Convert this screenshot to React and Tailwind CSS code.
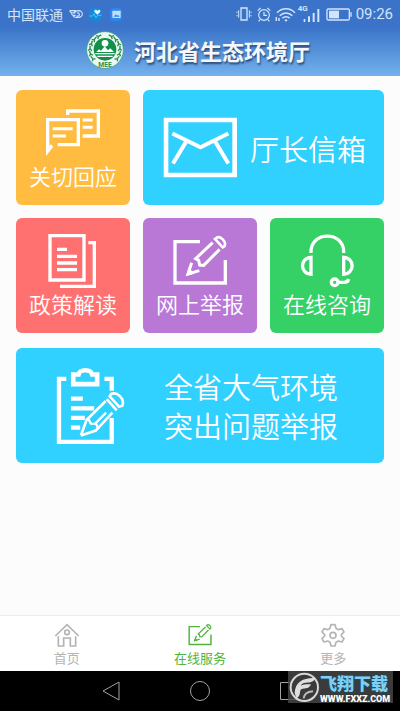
import { Activity, Image } from "lucide-react";

/* --- Status bar --- */
function StatusBar() {
  return (
    <div className="flex h-7 items-center justify-between pl-[7px] pr-[7px] text-[#d3e4fa]">
      <div className="flex items-center">
        <span className="text-sm leading-5">中国联通</span>
        <svg className="ml-[6px] h-3 w-[14px]" viewBox="0 0 42 36" fill="none" stroke="currentColor" strokeWidth="3.5">
          <path d="M2 8h17c2 0 3 2 1 3l-6 2M2 8c2 5 5 7 11 7h6M7 16c1 4 4 6 8 6h5M12 23c1 4 4 5 8 5h9c6 0 11-5 11-10s-5-10-11-10l-8 1" />
          <path d="M24 15c5-1 8 2 7 6s-5 4-8 2" />
        </svg>
        <span className="ml-[6px] flex h-[13px] w-[13px] items-center justify-center rounded-sm bg-[#1689dc]">
          <svg className="h-[13px] w-[13px]" viewBox="0 0 39 39" fill="none">
            <path d="M1 24h10l4-7 6 13 5-8h12" stroke="#4fbfe0" strokeWidth="3" />
            <path d="M25 20l-8-7c-4-6 4-11 8-4 4-7 12-2 8 4z" fill="#e9fbff" />
          </svg>
        </span>
        <span className="ml-2 flex h-[13px] w-3 items-center justify-center rounded-sm bg-[#2f86ee]">
          <svg className="h-[9px] w-[9px]" viewBox="0 0 27 27">
            <rect x="1" y="2" width="25" height="22" rx="2" fill="#bfe0ff" />
            <path d="M5 20l6-7 4 4 3-3 5 6z" fill="#2f86ee" />
          </svg>
        </span>
      </div>

      <div className="flex items-center">
        <svg className="h-[14px] w-4" viewBox="0 0 48 42" fill="none" stroke="currentColor" strokeWidth="4">
          <path d="M15 3h18v36H15z" />
          <path d="M8 10v22M40 10v22" strokeWidth="3" />
          <path d="M3 14v4M3 24v4M45 14v4M45 24v4" strokeWidth="3" />
        </svg>
        <svg className="ml-[5px] h-[15px] w-[14px]" viewBox="0 0 42 45" fill="none" stroke="currentColor" strokeWidth="3.5">
          <circle cx="21" cy="24" r="16" />
          <path d="M21 14v11h9M2 11l9-8M40 11l-9-8M9 38l-4 5M33 38l4 5" />
        </svg>
        <svg className="ml-[4px] h-[15px] w-[21px]" viewBox="0 0 63 45" fill="none" stroke="currentColor" strokeWidth="4.5">
          <path d="M6 17c15-16 39-16 54 0M14 26c11-11 27-11 38 0M22 34c6-6 16-6 22 0" />
          <circle cx="33" cy="40" r="3.5" fill="currentColor" stroke="none" />
          <path d="M4 30v12M12 33v9" />
        </svg>
        <div className="relative ml-[2px] h-[18px] w-[23px]">
          <span className="absolute left-0 top-0 font-[Roboto] text-[8px] font-bold leading-[8px]">4G</span>
          <svg className="h-[18px] w-[23px]" viewBox="0 0 69 54" fill="currentColor">
            <path d="M17 42h5v9h-5zM30 34h6v17h-6zM44 24h6v27h-6zM58 12h6v39h-6z" />
          </svg>
        </div>
        <svg className="ml-[5px] h-[13px] w-[26px]" viewBox="0 0 78 39" fill="none" stroke="currentColor" strokeWidth="4">
          <rect x="3" y="3" width="67" height="33" rx="4" />
          <path d="M9 8h30v23H9z" fill="currentColor" stroke="none" />
          <path d="M75 13v13" />
        </svg>
        <span className="ml-1 font-[Roboto] text-[15px] leading-5">09:26</span>
      </div>
    </div>
  );
}

function Emblem() {
  const leaves = [-125, -105, -85, -65, -45, -25, 25, 45, 65, 85, 105, 125];
  return (
    <svg className="h-[38px] w-[38px] shrink-0" viewBox="0 0 114 114">
      <circle cx="57" cy="57" r="55" fill="#eef8f2" stroke="#3d9d76" strokeWidth="2" />
      <g fill="none" stroke="#1d9052" strokeWidth="4">
        {leaves.map((angle) => (
          <path
            key={angle}
            d={angle < 0 ? "M51 7l6 5 9-1M51 18l6-6" : "M63 7l-6 5-9-1M63 18l-6-6"}
            transform={`rotate(${angle} 57 57)`}
          />
        ))}
      </g>
      <circle cx="57" cy="55" r="34" fill="#12904b" />
      <circle cx="57" cy="37" r="10" fill="#fff" />
      <path d="M31 63l8-8 6 4 11-13 10 12 7-6 11 11z" fill="#fff" />
      <path d="M28 68h58M34 76h46" stroke="#fff" strokeWidth="4" />
      <text x="57" y="107" textAnchor="middle" fontSize="20" fontWeight="700" fill="#1d9052" className="font-[Roboto]">
        MEE
      </text>
    </svg>
  );
}

/* --- Tile icons --- */
function ChatIcon() {
  return (
    <svg className="h-14 w-[60px]" viewBox="129 75 180 168" fill="none" stroke="currentColor" strokeWidth="10">
      <path d="M173 194h62v-75h-92v78" />
      <path d="M138 190v38l22-28-7-7-5 6v-9z" fill="currentColor" stroke="none" />
      <path d="M203 105V93h92v75h-47" />
      <path d="M158 146h60M158 168h40M248 120h30M248 142h30" strokeWidth="9" />
    </svg>
  );
}

function PolicyIcon() {
  return (
    <svg className="h-14 w-[60px]" viewBox="129 69 180 168" fill="none" stroke="currentColor" strokeWidth="10">
      <path d="M150 77h102v133H150z" />
      <path d="M265 98h18v131H180" />
      <path d="M171 118h30M171 139h60M171 159h60M171 179h60" />
    </svg>
  );
}

function EditIcon({ className }) {
  return (
    <svg className={className} viewBox="15 24 180 168" fill="none" stroke="currentColor" strokeWidth="10">
      <path d="M105 50H30v124h151v-69" />
      <path d="M143 53L92 101l9 5 3 14 12 1 48-48" strokeWidth="9" />
      <path d="M80 113l-11 34 34-10" strokeWidth="9" />
      <path d="M63 153l8-26 17 19z" fill="currentColor" stroke="none" />
      <path d="M154 39c10-9 31 10 25 24l-6 4-23-25z" strokeWidth="8" />
    </svg>
  );
}

function HeadsetIcon() {
  return (
    <svg className="h-14 w-[60px]" viewBox="291 69 180 168" fill="none" stroke="currentColor" strokeWidth="10">
      <path d="M333 129v-4c0-62 98-62 98 0v4" />
      <path d="M333 142v51c-34-2-34-49 0-51zM431 142v51c34-2 34-49 0-51z" />
      <circle cx="404" cy="217" r="10" />
      <path d="M414 217h18c8 0 12-2 14-10" />
    </svg>
  );
}

function MailIcon() {
  return (
    <svg className="h-[61px] w-[75px] shrink-0" viewBox="68 110 224 184" fill="none" stroke="currentColor" strokeWidth="14">
      <path d="M76 119h207v166H76z" />
      <path d="M95 160l85 41 84-41M97 250l41-68M264 250l-41-68" strokeWidth="12" />
    </svg>
  );
}

function ClipboardIcon() {
  return (
    <svg className="h-[78px] w-[69px] shrink-0" viewBox="168 80 208 234" fill="none" stroke="currentColor" strokeWidth="13">
      <path d="M199 115h-22v190h159v-72M314 115h22v36" />
      <path d="M220 102h16c4-17 37-17 41 0h15v29h-72z" strokeWidth="14" />
      <path d="M213 175h36M213 204h70M213 233h42M213 262h28" />
      <path d="M243 286l17-47 58-57M243 286l45-15 50-54" strokeWidth="8" />
      <path d="M265 235l8 15 16 1 7 16M286 250l33-33" strokeWidth="7" />
      <path d="M321 176l30 34M334 161c18-9 42 14 34 35l-10 3-28-31z" strokeWidth="8" />
    </svg>
  );
}

/* --- Bottom tab icons --- */
function HomeIcon() {
  return (
    <svg className="h-[26px] w-[26px]" viewBox="160 50 78 78" fill="none" stroke="currentColor" strokeWidth="5">
      <path d="M164 92l35-34 35 34M173 93v29h16v-24h20v24h16V93" />
      <circle cx="199" cy="81" r="7" />
    </svg>
  );
}

function GearIcon() {
  return (
    <svg className="h-[26px] w-[26px]" viewBox="0 0 78 78" fill="none" stroke="currentColor" strokeWidth="5" strokeLinejoin="round">
      <path d="M33 8h12l3 11 7 4 11-3 6 10-8 8v4l8 8-6 10-11-3-7 4-3 11H33l-3-11-7-4-11 3-6-10 8-8v-4l-8-8 6-10 11 3 7-4z" />
      <circle cx="39" cy="40" r="9" />
    </svg>
  );
}

function Tile({ icon, label, className }) {
  return (
    <button type="button" className={`flex h-[115px] flex-col items-center rounded-md pt-[15px] ${className}`}>
      {icon}
      <span className="text-[22px] font-[350] leading-7">{label}</span>
    </button>
  );
}

function Tab({ icon, label, active }) {
  return (
    <button
      type="button"
      className={`flex flex-1 flex-col items-center pt-[6px] ${active ? "text-[#4fb53c]" : "text-[#b4b4b4]"}`}
    >
      {icon}
      <span className="text-[13px] leading-5">{label}</span>
    </button>
  );
}

function SystemNav() {
  return (
    <div className="relative flex h-10 items-center justify-center gap-[69px] bg-black text-[#a3a3a3]">
      <button type="button" aria-label="返回">
        <svg className="h-5 w-5" viewBox="0 0 20 20" fill="none" stroke="currentColor">
          <path d="M18 1v18L2 10z" />
        </svg>
      </button>
      <button type="button" aria-label="主屏幕">
        <svg className="h-5 w-5" viewBox="0 0 20 20" fill="none" stroke="currentColor">
          <circle cx="10" cy="10" r="9.5" />
        </svg>
      </button>
      <button type="button" aria-label="最近任务">
        <svg className="h-5 w-5" viewBox="0 0 20 20" fill="none" stroke="currentColor">
          <path d="M1.5 1.5h17v17h-17z" />
        </svg>
      </button>

      {/* Site badge over the corner */}
      <div className="absolute right-[7px] top-0 flex h-8 w-[105px] items-center bg-[#4a4a4a]/80">
        <svg className="h-8 w-8 shrink-0" viewBox="0 0 96 96">
          <circle cx="49" cy="49" r="41" fill="#3a3a3a" stroke="#d8d8d8" strokeWidth="6" />
          <path d="M20 66c2-32 22-46 61-45-3 10-10 14-27 14-8 0-13 3-16 9 8-4 20-5 31-4-4 10-11 13-24 13-7 0-9 5-9 12-1 9-5 14-11 16z" fill="#dedede" />
          <path d="M47 82c2-13 8-19 28-21" stroke="#bbb" strokeWidth="6" fill="none" />
        </svg>
        <div className="flex flex-col">
          <span className="text-[17px] font-black leading-6 text-[#7fd0f0] [text-shadow:0_0_2px_#0b5d96]">飞翔下载</span>
          <span className="font-[Roboto] text-[9px] font-black leading-[8px] text-white">WWW.FXXZ.COM</span>
        </div>
      </div>
    </div>
  );
}

export default function App() {
  return (
    <div className="flex min-h-screen flex-col bg-[#fcfcfc] font-['Noto_Sans_CJK_SC',sans-serif]">
      <header className="bg-linear-to-b from-[#3a73c8] from-35% to-[#73b1ec]">
        <StatusBar />
        <div className="flex h-12 items-center justify-center gap-[10px] pb-1 pr-1">
          <Emblem />
          <h1 className="text-[22px] font-bold leading-8 text-[#f4f7fb] [text-shadow:1px_2px_2px_#2b4a78]">
            河北省生态环境厅
          </h1>
        </div>
      </header>

      <main className="flex flex-1 flex-col px-4 pt-[14px] text-white">
        <div className="grid grid-cols-3 gap-[13px]">
          <Tile icon={<ChatIcon />} label="关切回应" className="bg-[#ffbc40]" />
          <button type="button" className="col-span-2 flex items-center gap-3 rounded-md bg-[#30d0ff] pl-5">
            <MailIcon />
            <span className="text-[29px] font-[350] leading-10">厅长信箱</span>
          </button>
          <Tile icon={<PolicyIcon />} label="政策解读" className="bg-[#ff7171]" />
          <Tile icon={<EditIcon className="h-14 w-[60px]" />} label="网上举报" className="bg-[#b978d6]" />
          <Tile icon={<HeadsetIcon />} label="在线咨询" className="bg-[#35d167]" />
        </div>
        <button
          type="button"
          className="mt-[15px] flex h-[115px] items-center gap-[39px] rounded-md bg-[#30d0ff] pl-10 text-left"
        >
          <ClipboardIcon />
          <span className="text-[29px] font-[350] leading-[39px]">
            全省大气环境
            <br />
            突出问题举报
          </span>
        </button>
      </main>

      <nav className="flex h-14 border-t border-[#ececec] bg-white">
        <Tab icon={<HomeIcon />} label="首页" />
        <Tab icon={<EditIcon className="h-[26px] w-[26px]" />} label="在线服务" active />
        <Tab icon={<GearIcon />} label="更多" />
      </nav>
      <SystemNav />
    </div>
  );
}
